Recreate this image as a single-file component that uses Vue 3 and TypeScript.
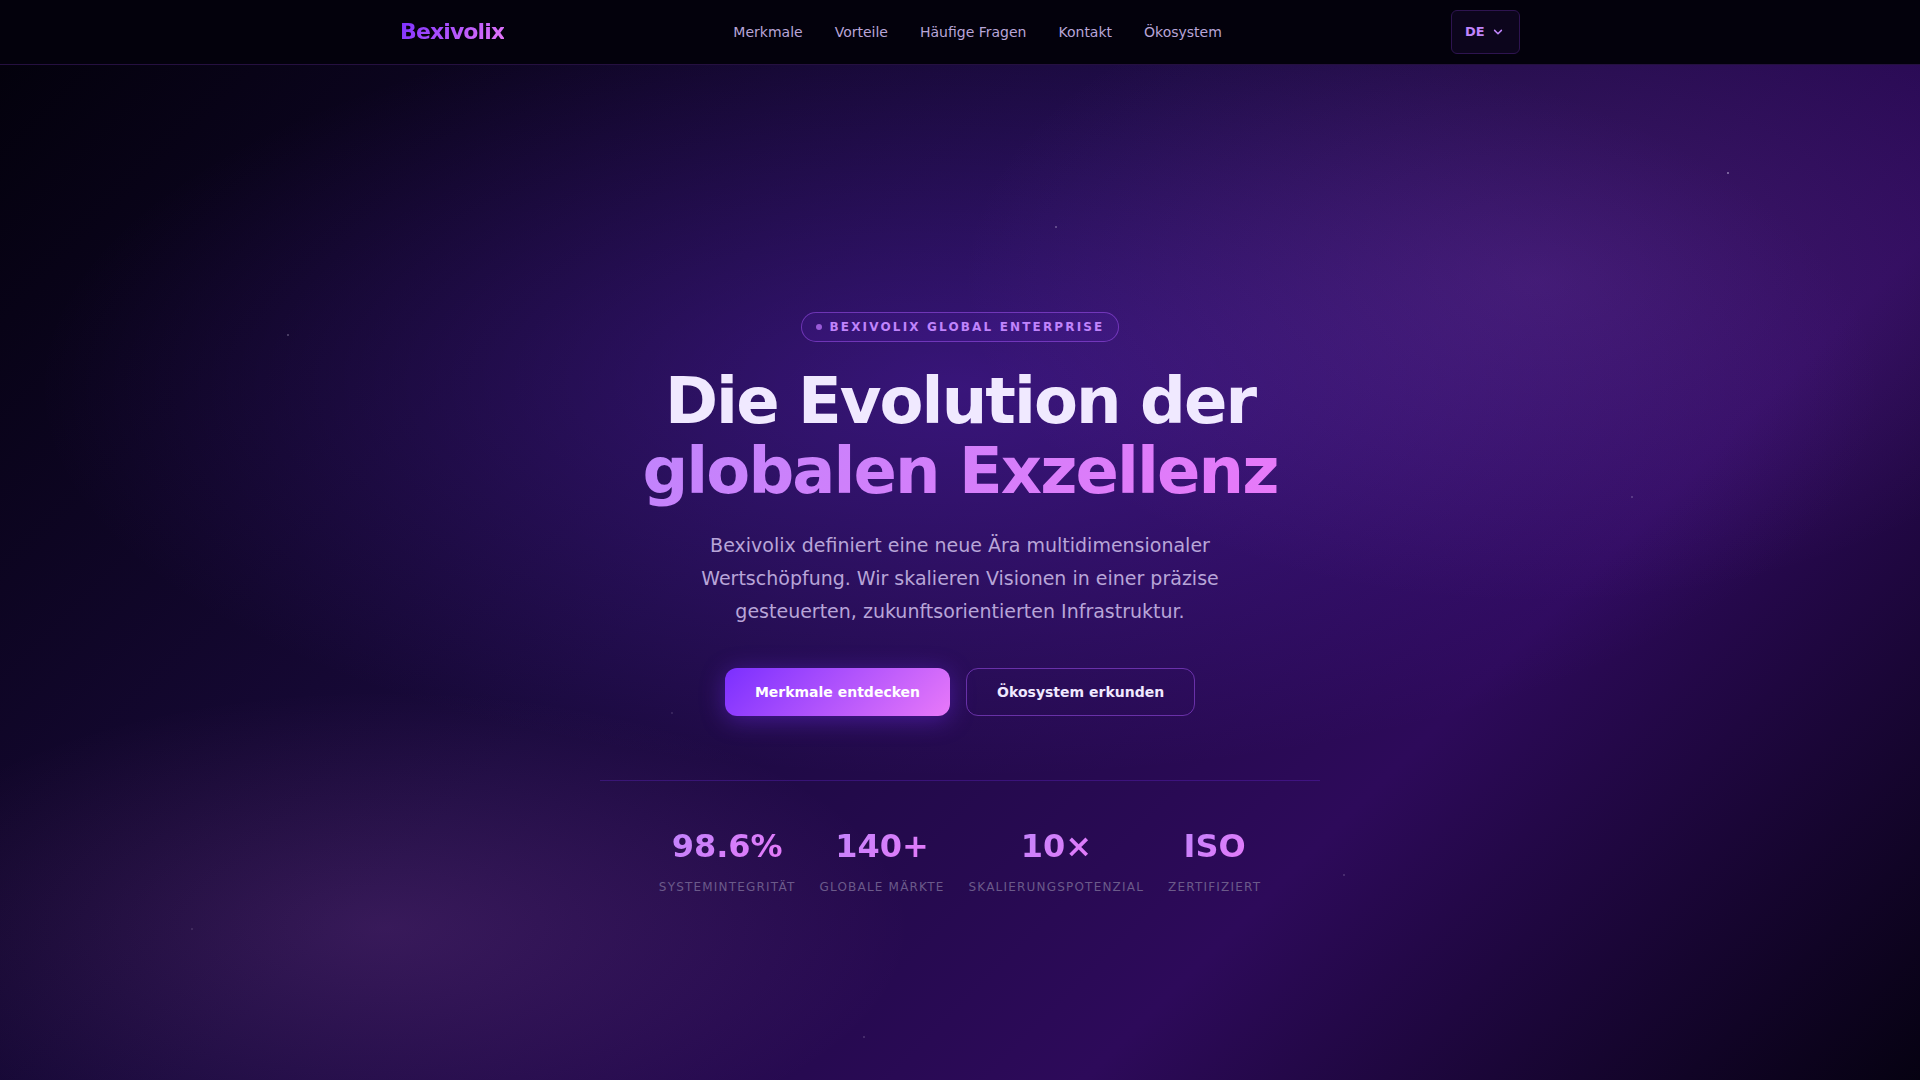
<script setup lang="ts">
import { ref } from 'vue'

interface NavLink {
  label: string
  href: string
}

interface Stat {
  value: string
  label: string
}

interface Star {
  x: number
  y: number
  opacity: number
}

const language = ref('DE')

const links: NavLink[] = [
  { label: 'Merkmale', href: '#merkmale' },
  { label: 'Vorteile', href: '#vorteile' },
  { label: 'Häufige Fragen', href: '#faq' },
  { label: 'Kontakt', href: '#kontakt' },
  { label: 'Ökosystem', href: '#oekosystem' },
]

const stats: Stat[] = [
  { value: '98.6%', label: 'Systemintegrität' },
  { value: '140+', label: 'Globale Märkte' },
  { value: '10×', label: 'Skalierungspotenzial' },
  { value: 'ISO', label: 'Zertifiziert' },
]

// Positions are percentages of the hero area
const stars: Star[] = [
  { x: 90, y: 10, opacity: 0.5 },
  { x: 55, y: 15, opacity: 0.35 },
  { x: 15, y: 25, opacity: 0.3 },
  { x: 85, y: 40, opacity: 0.25 },
  { x: 35, y: 60, opacity: 0.15 },
  { x: 70, y: 75, opacity: 0.2 },
  { x: 10, y: 80, opacity: 0.15 },
  { x: 45, y: 90, opacity: 0.2 },
]
</script>

<template>
  <div class="page">
    <header class="header">
      <div class="header-inner">
        <a class="logo" href="#start">Bexivolix</a>
        <nav class="nav" aria-label="Hauptnavigation">
          <a v-for="link in links" :key="link.href" class="nav-link" :href="link.href">{{ link.label }}</a>
        </nav>
        <div class="language">
          <select v-model="language" class="language-select" aria-label="Sprache">
            <option value="DE">DE</option>
          </select>
          <svg class="chevron" viewBox="0 0 12 12" aria-hidden="true">
            <path d="M2.6 4.4L6 7.8l3.4-3.4" fill="none" stroke="currentColor" stroke-width="1.5" stroke-linecap="round" stroke-linejoin="round" />
          </svg>
        </div>
      </div>
    </header>

    <main id="start" class="hero">
      <span
        v-for="star in stars"
        :key="star.x"
        class="star"
        :style="{ left: `${star.x}%`, top: `${star.y}%`, opacity: star.opacity }"
      ></span>

      <div class="content">
        <div class="badge"><span class="badge-dot"></span>Bexivolix Global Enterprise</div>
        <h1 class="title">Die Evolution der<br /><span class="title-accent">globalen Exzellenz</span></h1>
        <p class="lead">
          Bexivolix definiert eine neue Ära multidimensionaler Wertschöpfung. Wir skalieren Visionen in einer präzise
          gesteuerten, zukunftsorientierten Infrastruktur.
        </p>
        <div class="actions">
          <a class="btn btn-primary" href="#merkmale">Merkmale entdecken</a>
          <a class="btn btn-outline" href="#oekosystem">Ökosystem erkunden</a>
        </div>
        <div class="stats">
          <div v-for="stat in stats" :key="stat.label" class="stat">
            <div class="stat-value">{{ stat.value }}</div>
            <div class="stat-label">{{ stat.label }}</div>
          </div>
        </div>
      </div>
    </main>
  </div>
</template>

<style>
body {
  background: #03010c;
}
</style>

<style scoped>
.page {
  height: 100vh;
  overflow: hidden;
  background: #03010c;
  color: #f0e9ff;
  font-family: 'DejaVu Sans', sans-serif;
}

.header {
  box-sizing: border-box;
  height: 64px;
  box-shadow: 0 1px 0 #251040;
  position: relative;
  z-index: 1;
  background: #03010c;
}

.header-inner {
  box-sizing: border-box;
  max-width: 1200px;
  height: 100%;
  margin: 0 auto;
  padding: 0 40px;
  display: flex;
  align-items: center;
  justify-content: space-between;
}

.logo {
  font-size: 22px;
  line-height: 24px;
  font-weight: 700;
  letter-spacing: -0.04em;
  text-decoration: none;
  color: transparent;
  background: linear-gradient(135deg, #7b2fff, #e879f9);
  background-clip: text;
}

.nav {
  display: flex;
  gap: 32px;
}

.nav-link {
  font-size: 14px;
  line-height: 24px;
  color: #b8a5d8;
  text-decoration: none;
}

.language {
  display: grid;
  align-items: center;
}

.language-select,
.chevron {
  grid-area: 1 / 1;
}

.language-select {
  appearance: none;
  box-sizing: border-box;
  width: 69px;
  height: 44px;
  padding: 0 32px 0 13px;
  border: 1px solid #2e1450;
  border-radius: 6px;
  background: #0c051c;
  color: #c084fc;
  font: 700 13px/20px 'DejaVu Sans', sans-serif;
}

.chevron {
  justify-self: end;
  width: 12px;
  height: 12px;
  margin-right: 16px;
  color: #c084fc;
  pointer-events: none;
}

.hero {
  position: relative;
  box-sizing: border-box;
  min-height: 100vh;
  padding: 40px 24px;
  display: flex;
  align-items: center;
  justify-content: center;
  background:
    radial-gradient(ellipse 50% 50% at 80% 20%, rgba(192, 110, 250, 0.15), transparent 60%),
    radial-gradient(ellipse 50% 40% at 20% 80%, rgba(232, 121, 249, 0.14), transparent 55%),
    radial-gradient(ellipse 80% 60% at 50% 30%, rgba(123, 47, 255, 0.3), transparent 60%),
    linear-gradient(135deg, #03010c 0%, #1a0a3e 40%, #2d0a5a 70%, #03010c 100%);
}

.star {
  position: absolute;
  width: 2px;
  height: 2px;
  margin-left: -1px;
  border-radius: 1px;
  background: #f0e9ff;
}

.content {
  width: 100%;
  max-width: 720px;
  display: flex;
  flex-direction: column;
  align-items: center;
  text-align: center;
}

.badge {
  display: flex;
  align-items: center;
  gap: 8px;
  padding: 6px 14px;
  border: 1px solid rgba(168, 85, 247, 0.5);
  border-radius: 16px;
  background: rgba(123, 47, 255, 0.08);
  color: #c084fc;
  font-size: 12px;
  line-height: 16px;
  font-weight: 700;
  letter-spacing: 0.18em;
  text-transform: uppercase;
}

.badge-dot {
  width: 6px;
  height: 6px;
  border-radius: 50%;
  background: #9a5bd8;
}

.title {
  margin: 24px 0 0;
  font-size: 64px;
  line-height: 70px;
  font-weight: 700;
  letter-spacing: -0.03em;
}

.title-accent {
  color: transparent;
  background: linear-gradient(135deg, #c084fc, #e879f9);
  background-clip: text;
}

.lead {
  max-width: 560px;
  margin: 23px 0 40px;
  font-size: 19px;
  line-height: 33px;
  color: #b8a5d8;
}

.actions {
  display: flex;
  gap: 16px;
}

.btn {
  box-sizing: border-box;
  height: 48px;
  padding: 0 30px;
  border-radius: 12px;
  font-size: 14px;
  line-height: 48px;
  font-weight: 700;
  text-decoration: none;
}

.btn-primary {
  color: #fff;
  background: linear-gradient(135deg, #7b2fff, #e879f9);
  box-shadow: 0 4px 24px rgba(123, 47, 255, 0.4);
}

.btn-outline {
  border: 1px solid rgba(168, 85, 247, 0.5);
  line-height: 46px;
  color: #f0e9ff;
}

.stats {
  box-sizing: border-box;
  width: 100%;
  margin-top: 64px;
  padding-top: 40px;
  border-top: 1px solid rgba(123, 47, 255, 0.25);
  display: flex;
  justify-content: center;
  gap: 24px;
}

.stat-value {
  width: fit-content;
  margin: 0 auto 5px;
  font-size: 32px;
  line-height: 51px;
  font-weight: 700;
  color: transparent;
  background: linear-gradient(135deg, #c084fc, #e879f9);
  background-clip: text;
}

.stat-label {
  font-size: 12px;
  line-height: 20px;
  letter-spacing: 0.1em;
  text-transform: uppercase;
  color: #6b5a8a;
}
</style>
